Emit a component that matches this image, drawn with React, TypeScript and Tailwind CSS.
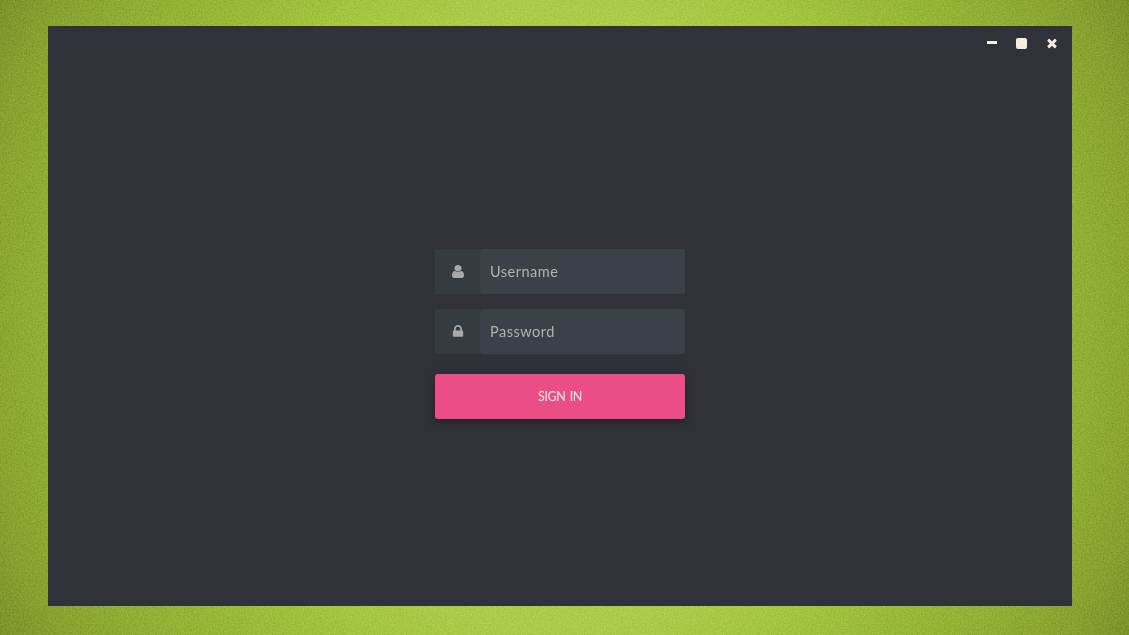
import type { ReactNode } from 'react';

function Icon({ viewBox, className, d }: { viewBox: string; className: string; d: string }) {
  return (
    <svg viewBox={viewBox} className={className} preserveAspectRatio="none" fill="currentColor" aria-hidden="true">
      <path d={d} />
    </svg>
  );
}

const USER =
  'M1280 1399q0 109-62.5 187t-150.5 78h-854q-88 0-150.5-78t-62.5-187q0-85 8.5-160.5t31.5-152 58.5-131 94-89 134.5-34.5q131 128 313 128t313-128q76 0 134.5 34.5t94 89 58.5 131 31.5 152 8.5 160.5zm-256-887q0 159-112.5 271.5t-271.5 112.5-271.5-112.5-112.5-271.5 112.5-271.5 271.5-112.5 271.5 112.5 112.5 271.5z';
const LOCK =
  'M640 768h512v-192q0-106-75-181t-181-75-181 75-75 181v192zm832 96v576q0 40-28 68t-68 28h-960q-40 0-68-28t-28-68v-576q0-40 28-68t68-28h32v-192q0-184 132-316t316-132 316 132 132 316v192h32q40 0 68 28t28 68z';
const CLOSE =
  'M1490 1322q0 40-28 68l-136 136q-28 28-68 28t-68-28l-294-294-294 294q-28 28-68 28t-68-28l-136-136q-28-28-28-68t28-68l294-294-294-294q-28-28-28-68t28-68l136-136q28-28 68-28t68 28l294 294 294-294q28-28 68-28t68 28l136 136q28 28 28 68t-28 68l-294 294 294 294q28 28 28 68z';

// Fine film grain laid over the wallpaper gradient
function Grain() {
  return (
    <svg className="pointer-events-none absolute inset-0 h-full w-full opacity-25 mix-blend-soft-light" aria-hidden="true">
      <filter id="grain" colorInterpolationFilters="sRGB">
        <feTurbulence type="fractalNoise" baseFrequency="0.65" numOctaves="2" seed="4" />
        <feColorMatrix values="1.6 0 0 0 -0.35  1.6 0 0 0 -0.35  1.6 0 0 0 -0.35  0 0 0 0 1" />
      </filter>
      <rect width="100%" height="100%" filter="url(#grain)" />
    </svg>
  );
}

function TitleBar() {
  return (
    <div className="flex h-[35px] shrink-0 justify-end text-[#f3eedd]">
      <button type="button" aria-label="Minimize" className="flex w-[30px] items-center justify-center">
        <span className="mb-0.5 h-[3px] w-2.5 bg-current" />
      </button>
      <button type="button" aria-label="Maximize" className="flex w-[30px] items-center justify-center">
        <span className="mr-px h-[11px] w-[11px] rounded-[2px] bg-current" />
      </button>
      <button type="button" aria-label="Close" className="flex w-[30px] items-center justify-center">
        <Icon viewBox="0 0 1792 1792" className="mb-0.5 size-3.5" d={CLOSE} />
      </button>
      <div className="w-[5px]" />
    </div>
  );
}

function Field({ icon, type, placeholder }: { icon: ReactNode; type: string; placeholder: string }) {
  return (
    <label className="flex h-[45px]">
      <span className="flex w-[45px] items-center justify-center bg-[#363b42] text-[#a9a9ac]">{icon}</span>
      <input
        type={type}
        placeholder={placeholder}
        className="w-[205px] rounded-[3px] bg-[#3c4048] px-2.5 text-[14.5px] tracking-[0.5px] outline-none placeholder:text-[#b2b3ae]"
      />
    </label>
  );
}

export default function App() {
  return (
    <div className="relative flex h-screen w-screen overflow-hidden bg-[radial-gradient(circle_at_50%_50%,#b0d050_0px,#adcd4b_310px,#a5c741_370px,#98b937_460px,#91b034_530px,#88a230_600px,#7c942a_648px)] px-12 pt-[26px] font-['Lato',sans-serif]">
      <Grain />
      <main className="relative flex h-[580px] w-[1024px] flex-col bg-[#31313a]">
        <TitleBar />
        <form className="mx-auto mt-[188px] flex w-[250px] flex-col">
          <Field
            type="text"
            placeholder="Username"
            icon={<Icon viewBox="0 0 1280 1792" className="h-[15px] w-3" d={USER} />}
          />
          <div className="h-[15px]" />
          <Field
            type="password"
            placeholder="Password"
            icon={<Icon viewBox="0 0 1792 1792" className="h-[15px] w-4" d={LOCK} />}
          />
          <button
            type="button"
            className="mt-5 h-[45px] rounded-[3px] bg-[#eb4d87] pt-0.5 text-[12.5px] tracking-[-0.4px] text-[#f3eedd] shadow-[0_3px_10px_rgba(0,0,0,0.35)] [word-spacing:1.5px]"
          >
            SIGN IN
          </button>
        </form>
      </main>
    </div>
  );
}
